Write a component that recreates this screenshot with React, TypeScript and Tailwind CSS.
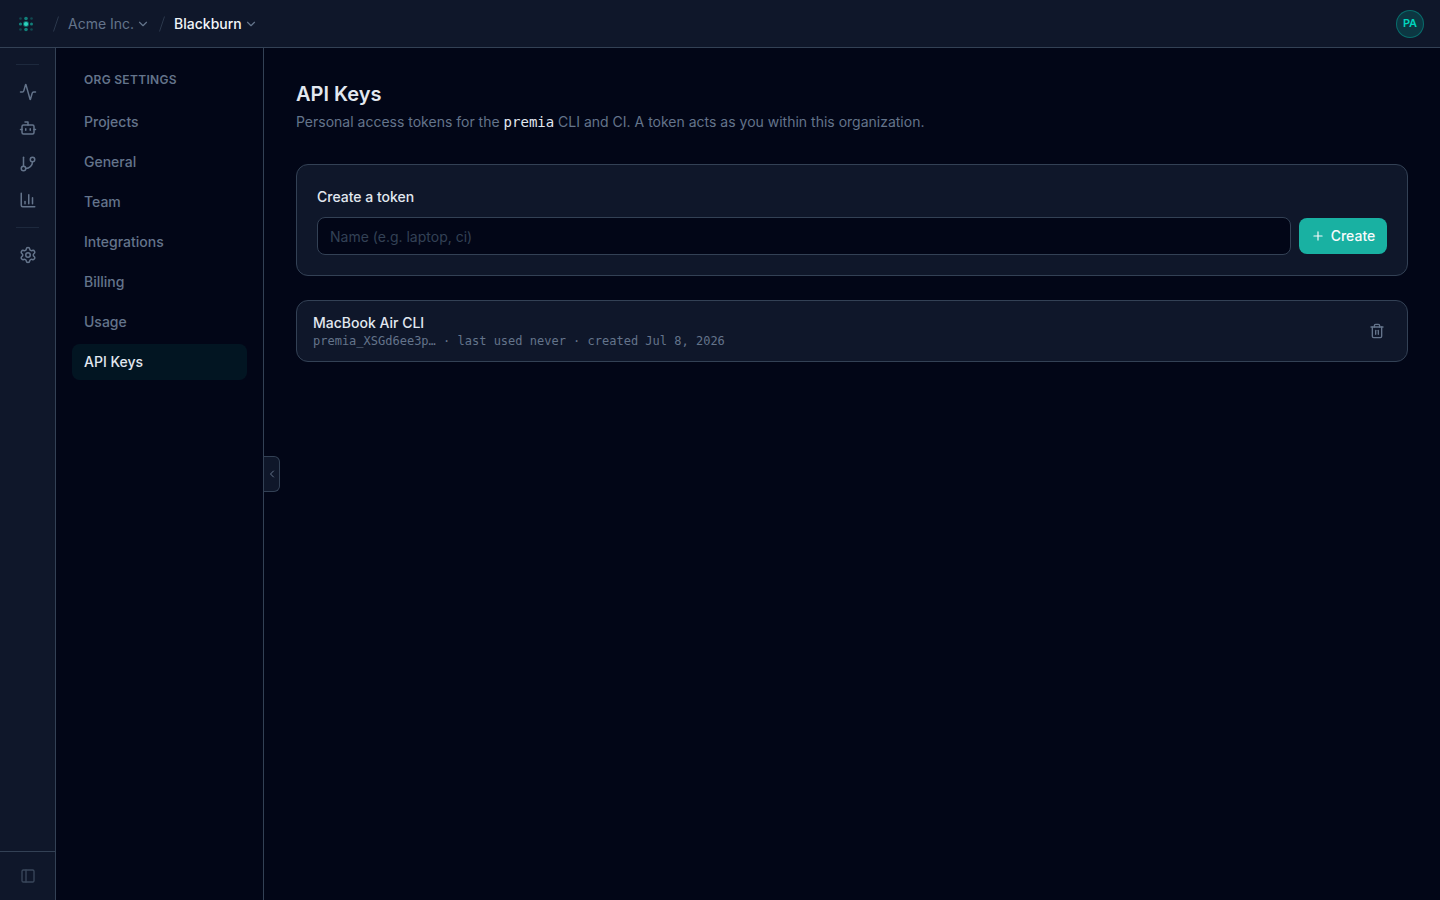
import React, { useState } from 'react';
import {
    Activity,
    Bot,
    ChartColumn,
    ChevronDown,
    ChevronLeft,
    GitBranch,
    PanelLeft,
    Plus,
    Settings,
    Trash2,
} from 'lucide-react';

const railItems = [
    { label: 'Activity', icon: Activity },
    { label: 'Agents', icon: Bot },
    { label: 'Branches', icon: GitBranch },
    { label: 'Analytics', icon: ChartColumn },
];

const settingsItems = ['Projects', 'General', 'Team', 'Integrations', 'Billing', 'Usage', 'API Keys'];

const tokens = [
    { id: 1, name: 'MacBook Air CLI', prefix: 'premia_XSGd6ee3p…', lastUsed: 'never', created: 'Jul 8, 2026' },
];

// Dot grid logo
const Logo = () => (
    <svg viewBox="0 0 20 20" className="size-5" fill="#14b8a6" aria-hidden="true">
        <g opacity="0.3">
            <circle cx="4.5" cy="4.5" r="1.3" />
            <circle cx="15.5" cy="4.5" r="1.3" />
            <circle cx="4.5" cy="15.5" r="1.3" />
            <circle cx="15.5" cy="15.5" r="1.3" />
        </g>
        <g opacity="0.65">
            <circle cx="10" cy="4.5" r="1.8" />
            <circle cx="4.5" cy="10" r="1.6" />
            <circle cx="15.5" cy="10" r="1.5" />
            <circle cx="10" cy="15.5" r="1.8" />
        </g>
        <circle cx="10" cy="10" r="3" opacity="0.5" />
        <circle cx="10" cy="10" r="2.1" fill="#2dd4bf" />
    </svg>
);

const Slash = () => (
    <svg viewBox="0 0 16 16" className="size-4 text-[#2a374b]" fill="none" stroke="currentColor" aria-hidden="true">
        <path d="M10.5 0.5L5.5 15.5" />
    </svg>
);

const TopBar = () => (
    <header className="flex h-12 shrink-0 items-center justify-between border-b border-[#334155] bg-[#0f172a] px-4">
        <nav className="flex items-center gap-1" aria-label="Breadcrumb">
            <a href="#" className="mr-2" aria-label="Home">
                <Logo />
            </a>
            <Slash />
            <button type="button" className="flex items-center gap-0.5 text-[#64748b]">
                Acme Inc.
                <ChevronDown className="size-3.5" />
            </button>
            <Slash />
            <button type="button" className="flex items-center gap-0.5 font-medium text-slate-100">
                Blackburn
                <ChevronDown className="size-3.5 text-[#64748b]" />
            </button>
        </nav>
        <button
            type="button"
            className="size-7 rounded-full border border-teal-500/40 bg-teal-500/20 text-[11px] font-semibold text-teal-400"
        >
            PA
        </button>
    </header>
);

const Rail = () => (
    <aside className="flex w-14 shrink-0 flex-col border-r border-[#334155] bg-[#0f172a] text-[#64748b]">
        <div className="flex flex-1 flex-col pt-4">
            <div className="mx-4 h-px bg-slate-800" />
            <nav className="my-[9px] flex flex-col items-center">
                {railItems.map(({ label, icon: Icon }) => (
                    <a key={label} href="#" aria-label={label} className="flex size-9 items-center justify-center">
                        <Icon className="size-[18px]" />
                    </a>
                ))}
            </nav>
            <div className="mx-4 h-px bg-slate-800" />
            <div className="my-[9px] flex justify-center">
                <a href="#" aria-label="Settings" className="flex size-9 items-center justify-center">
                    <Settings className="size-[18px]" />
                </a>
            </div>
        </div>
        <button
            type="button"
            aria-label="Toggle navigation"
            className="flex h-[49px] items-center justify-center border-t border-[#334155] text-[#3a475b]"
        >
            <PanelLeft className="size-4" />
        </button>
    </aside>
);

const SettingsNav = () => (
    <nav className="w-52 shrink-0 border-r border-[#334155] p-4" aria-label="Org settings">
        <h2 className="mb-4 px-3 pt-2 text-xs font-semibold tracking-wide text-[#64748b] uppercase">Org Settings</h2>
        <ul className="flex flex-col gap-1">
            {settingsItems.map((item) => (
                <li key={item}>
                    <a
                        href="#"
                        className={
                            item === 'API Keys'
                                ? 'block rounded-lg bg-teal-500/8 px-3 py-2 font-medium text-slate-200'
                                : 'block rounded-lg px-3 py-2 font-medium text-[#64748b]'
                        }
                    >
                        {item}
                    </a>
                </li>
            ))}
        </ul>
    </nav>
);

const App = () => {
    const [name, setName] = useState('');

    return (
        <div className="flex h-screen flex-col bg-[#020617] font-['Inter','Liberation_Sans',sans-serif] text-sm text-slate-200">
            <TopBar />
            <div className="flex min-h-0 flex-1">
                <Rail />
                <SettingsNav />
                <main className="relative min-w-0 flex-1 p-8">
                    {/* Collapse handle on the edge of the settings menu */}
                    <button
                        type="button"
                        aria-label="Collapse menu"
                        className="absolute top-1/2 left-0 flex h-9 w-4 -translate-y-1/2 items-center justify-center rounded-r-md border border-l-0 border-[#334155] bg-[#0f172a] text-[#64748b]"
                    >
                        <ChevronLeft className="size-3" />
                    </button>

                    <h1 className="text-xl font-semibold">API Keys</h1>
                    <p className="mt-1 text-[#64748b]">
                        Personal access tokens for the{' '}
                        <code className="font-['DejaVu_Sans_Mono',monospace] text-slate-200">premia</code> CLI and CI. A
                        token acts as you within this organization.
                    </p>

                    <form
                        className="mt-8 rounded-xl border border-[#334155] bg-[#0f172a] p-5"
                        onSubmit={(e) => e.preventDefault()}
                    >
                        <label htmlFor="token-name" className="block pt-0.5 font-medium">
                            Create a token
                        </label>
                        <div className="mt-2.5 flex items-center gap-2">
                            <input
                                id="token-name"
                                type="text"
                                value={name}
                                onChange={(e) => setName(e.target.value)}
                                placeholder="Name (e.g. laptop, ci)"
                                className="h-[38px] min-w-0 flex-1 rounded-lg border border-[#334155] bg-[#020617] px-3 placeholder:text-[#334155]"
                            />
                            <button
                                type="submit"
                                className="flex h-9 w-[88px] items-center justify-center gap-1.5 rounded-lg bg-[#19b1a2] font-medium text-slate-50"
                            >
                                <Plus className="size-3.5" />
                                Create
                            </button>
                        </div>
                    </form>

                    <ul className="mt-6 rounded-xl border border-[#334155] bg-[#0f172a]">
                        {tokens.map((token) => (
                            <li key={token.id} className="flex items-center justify-between px-4 py-3">
                                <div>
                                    <div className="font-medium">{token.name}</div>
                                    <div className="font-['DejaVu_Sans_Mono',monospace] text-xs text-[#64748b]">
                                        {token.prefix} · last used {token.lastUsed} · created {token.created}
                                    </div>
                                </div>
                                <button type="button" aria-label="Delete token" className="p-1.5 text-[#64748b]">
                                    <Trash2 className="size-4" />
                                </button>
                            </li>
                        ))}
                    </ul>
                </main>
            </div>
        </div>
    );
};

export default App;
